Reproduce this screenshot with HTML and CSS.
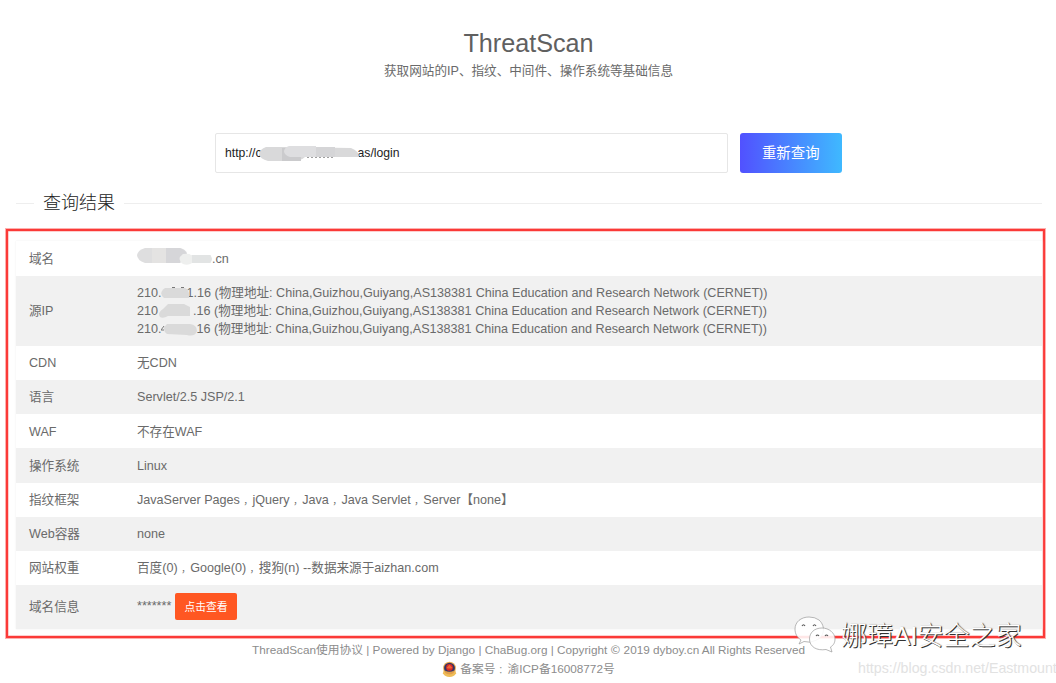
FILE: index.html
```html
<!DOCTYPE html>
<html lang="zh-CN">
<head>
<meta charset="utf-8">
<title>ThreatScan</title>
<link rel="stylesheet" href="styles.css">
</head>
<body>
<header class="hero">
  <h1 class="hero-title">ThreatScan</h1>
  <p class="hero-text">获取网站的IP、指纹、中间件、操作系统等基础信息</p>
</header>
<form class="search">
  <div class="search-input">http://c<span class="mask mask-url"><svg class="blob" width="102" height="20" viewBox="0 0 102 20"><path d="M7 3H30L92 4Q100 7 100 13H46Q42 17 34 17H9Q1 15 0 10Q1 5 7 3Z" fill="#d9d9da"/><path d="M23 4H42V17H23Z" fill="#cbcbcd"/><path d="M30 2H57V13H31Q25 11 25 7Q26 3 30 2Z" fill="#dedee0"/><path d="M57 3H76V13H57Z" fill="#d5d5d7"/><path d="M48 13.500h26" stroke="#888" stroke-width=".8" stroke-dasharray="2 2"/></svg></span>as/login</div>
  <button type="button" class="search-button">重新查询</button>
</form>
<div class="divider"><span class="divider-line divider-start"></span><h2 class="divider-title">查询结果</h2><span class="divider-line divider-end"></span></div>
<main class="result">
  <dl class="table">
    <div class="row"><dt>域名</dt><dd><span class="mask mask-domain"><svg class="blob" width="77" height="20" viewBox="0 0 77 20"><path d="M8 0H43Q48 1 50 5L43 15H8Q0 12 0 7Q1 2 8 0Z" fill="#dededf"/><path d="M15 0H29V15H15Z" fill="#e4e3e2"/><path d="M29 0H43Q48 2 50 6L43 15H29Z" fill="#d6d6d9"/><path d="M46 6Q52 5 54 7H74V15H55Q51 18 46 16Q39 11 46 6Z" fill="#eeefee"/><path d="M55 7H73Q77 11 73 15H55Z" fill="#e2e4e4"/></svg></span>.cn</dd></div>
    <div class="row row-ip"><dt>源IP</dt><dd>
      <div class="line">210.<span class="mask mask-ip"><svg class="blob" width="32" height="18" viewBox="0 0 32 18"><path d="M4 3H24Q29 5 28 13H3Q-3 8 4 3Z" fill="#dadada"/><path d="M11 2.500h3M20 2.500h3" stroke="#777"/></svg></span>1.16 (物理地址: China,Guizhou,Guiyang,AS138381 China Education and Research Network (CERNET))</div>
      <div class="line">210<span class="mask mask-ip-wide"><svg class="blob" width="34" height="18" viewBox="0 0 34 18"><path d="M10 1H26L32 4V13H10Q5 16 2 14Q-1 10 5 6Z" fill="#dadada"/></svg></span>.16 (物理地址: China,Guizhou,Guiyang,AS138381 China Education and Research Network (CERNET))</div>
      <div class="line">210.<span class="mask mask-ip-end"><svg class="blob" width="38" height="18" viewBox="0 0 38 18"><path d="M6 3H29Q36 4 36 10Q34 16 26 14L6 13Q0 8 6 3Z" fill="#dadada"/><path d="M3 5L0 9H3" stroke="#777" fill="none"/></svg></span>16 (物理地址: China,Guizhou,Guiyang,AS138381 China Education and Research Network (CERNET))</div>
    </dd></div>
    <div class="row"><dt>CDN</dt><dd>无CDN</dd></div>
    <div class="row"><dt>语言</dt><dd>Servlet/2.5 JSP/2.1</dd></div>
    <div class="row"><dt>WAF</dt><dd>不存在WAF</dd></div>
    <div class="row"><dt>操作系统</dt><dd>Linux</dd></div>
    <div class="row"><dt>指纹框架</dt><dd>JavaServer Pages<span class="comma">，</span>jQuery<span class="comma">，</span>Java<span class="comma">，</span>Java Servlet<span class="comma">，</span>Server【none】</dd></div>
    <div class="row"><dt>Web容器</dt><dd>none</dd></div>
    <div class="row"><dt>网站权重</dt><dd>百度(0)<span class="comma">，</span>Google(0)<span class="comma">，</span>搜狗(n) --数据来源于aizhan.com</dd></div>
    <div class="row row-info"><dt>域名信息</dt><dd>******* <button type="button" class="view-button">点击查看</button></dd></div>
  </dl>
</main>
<footer class="footer">
  <div class="footer-line">ThreadScan使用协议 | Powered by Django | ChaBug.org | Copyright <span class="copy">©</span> 2019 dyboy.cn All Rights Reserved</div>
  <div class="footer-line footer-record">
    <svg class="badge" width="15" height="17" viewBox="0 0 16 18"><path d="M2 9L1 13Q3 17 8 17T15 13L14 9Z" fill="#efbd58"/><circle cx="8" cy="7.5" r="6.8" fill="#e9ac50"/><circle cx="8" cy="7.5" r="5.8" fill="#333365"/><circle cx="8" cy="6.800" r="3.600" fill="#d82b27"/><path d="M5 7L8 4L11 7L10 8H6Z" fill="#ef6636"/><path d="M3 10Q8 13 13 10L12 13Q8 15 4 13Z" fill="#e3a04b"/></svg>
    <span>备案号<span class="comma colon">：</span>渝ICP备16008772号</span>
  </div>
</footer>
<div class="watermark">
  <svg class="wechat" width="42" height="38" viewBox="0 0 42 38"><g fill="#fff" fill-opacity=".88" stroke="#999" stroke-width=".7"><path d="M15 1C7 1 1 6 1 13C1 18 3 21 7 24L5 28L10 25.500Q16 27 20 25C31 22 32 10 25 4Q21 1 15 1Z"/><path d="M28 12C20 12 15.500 17 15.500 23C15.500 31 23 35 32 33.500L38 36L36.500 31C40 29 41 26 41 23C41 17 35 12 28 12Z"/></g><g fill="none" stroke="#555" stroke-width="1.100"><path d="M8 10q1.500-2.500 3 0M19 10q1.500-2.500 3 0M22 20q1.500-2 3 0M31 20q1.500-2 3 0"/></g></svg>
  <span class="watermark-name">娜璋AI安全之家</span>
</div>
<div class="watermark-link">https://blog.csdn.net/Eastmount</div>
</body>
</html>
```
FILE: styles.css
```css
* { box-sizing: border-box; }
body {
  margin: 0;
  height: 683px;
  position: relative;
  overflow: hidden;
  background: #fff;
  color: #6a6a6a;
  font: 12.6px/18px "Liberation Sans", "Noto Sans CJK SC", sans-serif;
}
h1, h2, p, dl, dd { margin: 0; font-weight: 400; }
button { border: 0; padding: 0; font-family: inherit; color: #fff; }
.hero { height: 133px; padding: 25px 0 0 1px; text-align: center; }
.hero-title { font-size: 25.2px; line-height: 36px; color: #606060; }
.hero-text { margin-top: 1px; color: #6a6a6a; }
.search { display: flex; gap: 11.500px; padding-left: 215px; }
.search-input {
  width: 513px;
  height: 40px;
  padding: 0 9px;
  border: 1px solid #e6e6e6;
  border-radius: 2px;
  line-height: 39px;
  font-size: 12.2px;
  color: #222;
}
.search-button {
  width: 102.500px;
  height: 40px;
  padding-bottom: 3px;
  border-radius: 3px;
  background: linear-gradient(90deg, #5151ff, #3fb9ff);
  font-size: 14.4px;
}
.divider { display: flex; align-items: center; height: 36px; margin: 12px 14px 0 16px; }
.divider-line { height: 1px; background: #eee; }
.divider-start { width: 18px; }
.divider-end { flex: 1; }
.divider-title { padding: 0 9px; font-size: 18px; font-weight: 300; color: #222; line-height: 36px; }
.result {
  width: 1039px;
  height: 409px;
  margin: 8px 0 1px 6px;
  padding: 10px 0 0 8px;
  border: 2px solid #fb3a38;
  box-shadow: inset 0 0 0 .5px #fda09f, 0 0 0 1px #fdb0af;
}
.table { width: 1026px; padding-top: .500px; box-shadow: 0 0 2px #eee; }
.row { display: flex; align-items: center; height: 34.200px; padding: .600px 0 0 13px; }
.row:nth-child(even) { background: #f1f1f1; }
.row dt { width: 108px; }
.row-ip { height: 70.200px; padding-top: 1.200px; }
.row-info { height: 43.500px; padding-top: 0; }
.line { height: 18px; white-space: nowrap; }
.comma { padding-left: 3.600px; font-size: 9px; }
.colon { padding-left: 3px; }
.mask { display: inline-block; position: relative; height: 18px; vertical-align: middle; }
.mask-url { width: 96px; line-height: 18px; }
.mask-url .blob { left: -3px; top: -1px; }
.mask-domain { width: 75px; }
.mask-domain .blob { top: -2px; }
.mask-ip { width: 25px; }
.mask-ip .blob, .mask-ip-end .blob { left: -1px; }
.mask-ip-wide { width: 35px; }
.mask-ip-end { width: 35px; }
.blob { position: absolute; left: 0; top: 0; }
.view-button { width: 61.500px; height: 27px; margin-left: .5px; padding-bottom: 1px; border-radius: 2px; background: #ff5722; font-size: 10.800px; vertical-align: middle; }
.footer { padding-left: 1px; text-align: center; font-size: 11.750px; color: #8c8c8c; }
.footer-line { height: 20px; line-height: 20px; }
.copy { font-family: "Noto Sans CJK SC", sans-serif; }
.footer-record { display: flex; justify-content: center; align-items: center; gap: 3px; }
.watermark { position: absolute; left: 794px; top: 616px; display: flex; gap: 5px; }
.watermark-name {
  font-size: 26px;
  line-height: 40px;
  font-weight: 300;
  color: #fff;
  text-shadow: 1px 1px 0 #333, 1px 0 1px #666;
  white-space: nowrap;
}
.watermark-link {
  position: absolute;
  left: 858px;
  top: 658px;
  font-size: 14.200px;
  line-height: 20px;
  color: #e2e2e2;
  white-space: nowrap;
}
```
